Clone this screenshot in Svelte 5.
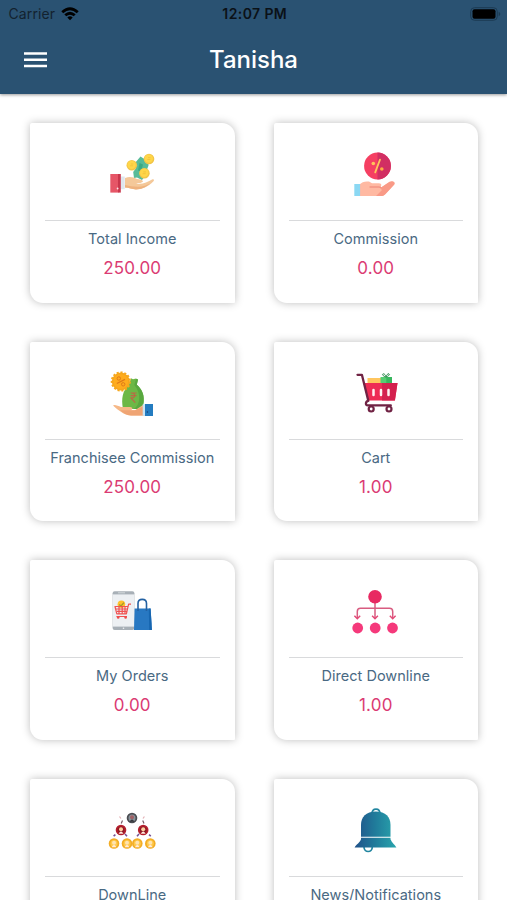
<script>
  const cards = [
    { icon: "income", label: "Total Income", value: "250.00" },
    { icon: "commission", label: "Commission", value: "0.00" },
    { icon: "franchisee", label: "Franchisee Commission", value: "250.00" },
    { icon: "cart", label: "Cart", value: "1.00" },
    { icon: "orders", label: "My Orders", value: "0.00" },
    { icon: "direct", label: "Direct Downline", value: "1.00" },
    { icon: "downline", label: "DownLine" },
    { icon: "news", label: "News/Notifications" },
  ];

  const coins = [[31.8, 20.3], [49, 14], [44.4, 28.2]];
  const people = [
    [32, 17, "#4b4d52", "#a06065"],
    [21, 29, "#b51f2d", "#ffd0a0"],
    [43.2, 29, "#b51f2d", "#ffd0a0"],
    [14, 42.5, "#f3ad25", "#ffe3b0"],
    [27, 42.5, "#f3ad25", "#ffe3b0"],
    [37.3, 42.5, "#f3ad25", "#ffe3b0"],
    [50.3, 42.5, "#f3ad25", "#ffe3b0"],
  ];
</script>

<div class="screen">
  <header>
    <div class="status">
      <div class="carrier">
        <span>Carrier</span>
        <svg width="18" height="14" viewBox="0 0 18 14">
          <path d="M.3 4.2Q9-3.6 17.7 4.2L15.8 6.2Q9 .2 2.2 6.2z" />
          <path d="M3.3 7.3Q9 2.3 14.7 7.3L12.8 9.3Q9 6 5.2 9.3z" />
          <path d="M6.3 10.4Q9 8.2 11.7 10.4L9 13.2z" />
        </svg>
      </div>
      <b>12:07 PM</b>
      <svg class="battery" width="31" height="14" viewBox="0 0 31 14">
        <rect x=".7" y=".7" width="26.6" height="12.6" rx="3.8" fill="none" stroke="#1c3b53" />
        <rect x="2.5" y="2.3" width="23" height="9.4" rx="2" />
        <path d="M28.7 4.7q1.6.7 1.6 2.3t-1.6 2.3z" fill="#1c3b53" />
      </svg>
    </div>
    <div class="bar">
      <button aria-label="Menu">
        <svg width="23" height="16" viewBox="0 0 23 16">
          <path d="M0 .3h23v2.4H0zM0 6.6h23V9H0zM0 12.8h23v2.4H0z" fill="#fff" />
        </svg>
      </button>
      <h1>Tanisha</h1>
    </div>
  </header>

  <main>
    {#each cards as card}
      <section class="card">
        <svg class="icon" width="64" height="56" viewBox="0 0 64 56">
          {#if card.icon == "income"}
            <path d="M35 18l5.5-6.5 3 2 4.5-1 .5 8-1.5 4-1 5.5L42 35l-5-2.5-3 .4-.8-6 2.8-4z" fill="#57bb98" />
            <path d="M39.5 18l3.5 1.5-2 7-3-1z" fill="#3ba982" />
            <path d="M25 33c5-2 9-.7 12 1 3 .6 5 .6 6 2.3-1 2-4 1.7-7 2 5 1.7 11-.8 16.5-4 1.5-.5 2 .7 1 2C48 42 42 44.4 36 44.4c-4 0-7-1.6-11-1.8z" fill="#f4c899" />
            <path d="M25 40c5 1 13 3 20 .8l5-2.2c-5 4.4-9 5.8-14 5.8-4 0-7-1.6-11-1.8z" fill="#eeb27e" />
            <path d="M20.5 31.5h4.2v12.7h-4.2z" fill="#dfe6ef" />
            <path d="M10.3 29h8.2v18.6h-8.2z" fill="#e65667" />
            <path d="M18 29h2.8v18.6H18z" fill="#c9374c" />
            <circle cx="17.6" cy="43.5" r=".9" fill="#ffe8ea" />
            {#each coins as [x, y]}
              <circle cx={x} cy={y} r="5.3" fill="#f2c548" />
              <circle cx={x - 0.2} cy={y - 0.4} r="4.2" fill="#ffd649" />
              <path d="M{x - 1.7} {y + 0.5}h3M{x - 1} {y - 1.3}h2.5" stroke="#f0c038" stroke-width=".8" />
            {/each}
          {:else if card.icon == "commission"}
            <circle cx="33.5" cy="21" r="13.4" fill="#f53f62" />
            <path d="M33.5 7.6a13.4 13.4 0 0 1 0 26.8z" fill="#d12f63" />
            <path d="M36 14.6L31.2 27.4" stroke="#ffc35a" stroke-width="1.8" stroke-linecap="round" />
            <circle cx="29.3" cy="18.5" r="1.8" fill="#ffc35a" />
            <circle cx="37.8" cy="24" r="1.8" fill="#ffab45" />
            <path d="M15 40c3-3 6-4 10-3.4l3 1.6h7c3 0 3.2 3.3 0 3.8h2.8l8-5c3-1.5 6 0 4.5 2.4L41.5 49c-1.5 1.8-3 2-5 2H15z" fill="#ffb9a2" />
            <path d="M35 42h2.8l7.7-5.2c3-1.4 6 .2 4.8 2.6L41.5 49c-1.5 1.8-3 2-5 2H32l6-6z" fill="#f99a87" />
            <path d="M25.5 42H37" stroke="#f08c7c" stroke-width="1.2" />
            <path d="M10.3 39h5.8v12h-5.8z" fill="#8bd8f3" />
          {:else if card.icon == "franchisee"}
            <path d="M31 14.2l2 1.1 3-.8 2 1-1.2 5.2c4.7 4 7.3 9 6.9 16-.2 6-2.4 8.3-8 8.3H23c-2-11-.3-18 5.7-24z" fill="#6cb846" />
            <path d="M36 15l2 .5-1.2 5.2c4.7 4 7.3 9 6.9 16-.2 6-2.4 8.3-8 8.3h-2c7-4 7.6-16 .6-24z" fill="#58a83f" />
            <path d="M30.6 29h6M30.6 31.7h6M31 29c5 0 5 5 0 5l4.3 4.6" fill="none" stroke="#b96a45" stroke-width="1.2" />
            <path d="M13 41.6c1-1.4 5 0 8 1.5h9c3.2.2 3 3 0 3.2h5L43 41h2v10.5H31c-7 0-13-5.5-18-9.9z" fill="#f6b887" />
            <path d="M20 46.3h15l8-3.8h2v9H31c-4 0-7.5-2.3-11-5.2z" fill="#efa474" />
            <path d="M42.7 40.2h3.2v11.6h-3.2z" fill="#c9e4f5" />
            <path d="M45 40h8v12h-8z" fill="#247cc0" />
            <circle cx="47.4" cy="48" r=".8" fill="#173d77" />
            <circle cx="20.8" cy="17.5" r="9" fill="#f6a71d" stroke="#f6a71d" stroke-width="2.2" stroke-dasharray="2.1 1.7" />
            <circle cx="20.8" cy="17.5" r="7.3" fill="#ffac1d" />
            <path d="M16.8 19.5L25 15.4" stroke="#e07a1a" stroke-width="1.2" />
            <circle cx="18.8" cy="14.5" r="1.7" fill="none" stroke="#e07a1a" />
            <circle cx="23.2" cy="20.3" r="1.7" fill="none" stroke="#e07a1a" />
          {:else if card.icon == "cart"}
            <path d="M23.5 14h14v8h-14z" fill="#ffc65f" />
            <path d="M36.5 13H48v9H36.5z" fill="#55cd72" />
            <path d="M42.3 13H48v9h-5.7z" fill="#37b65d" />
            <path d="M41.7 13c-3-1-4-3-2.3-3.2 1.2 0 2 1.3 2.6 3 .6-1.8 1.6-3.3 3-3 1.3.6-.4 2.5-3.3 3.2z" fill="none" stroke="#2c8a4c" stroke-width="1" />
            <path d="M20 19h33.5l-2.6 17.6H23.7z" fill="#ee2c55" />
            <path d="M38 19h15.5l-2.6 17.6H38z" fill="#d4204e" />
            <path d="M29.5 26V31M37 26V31M44.5 26V31" stroke="#fff1f2" stroke-width="2.5" stroke-linecap="round" />
            <path d="M13.5 10.8h4.4l6.4 26c-2.7.4-3.4 4.5-.5 4.6h23" fill="none" stroke="#702344" stroke-width="2.3" stroke-linecap="round" stroke-linejoin="round" />
            <circle cx="27.2" cy="45" r="2.5" fill="#fff" stroke="#702344" stroke-width="2.2" />
            <circle cx="45" cy="45" r="2.5" fill="#fff" stroke="#702344" stroke-width="2.2" />
          {:else if card.icon == "orders"}
            <rect x="12.6" y="9.2" width="21.8" height="38.8" rx="2" fill="#a8b0b7" />
            <path d="M12.6 12.4h21.8v32.2H12.6z" fill="#edf0f3" />
            <path d="M18 10.8h7" stroke="#dee2e5" stroke-width=".8" />
            <circle cx="23.5" cy="46.2" r=".8" fill="#eef0f2" />
            <circle cx="21.4" cy="22.3" r="3.8" fill="#ffc02b" />
            <path d="M19.2 22.6l1.7 1.5 3-3.5" fill="none" stroke="#a39b29" stroke-width="1.4" />
            <path d="M31 22.2h-2.4l-2.2 9.6H16.8L15 24.5h12.7M16 27h11M17 29.4h9.5M19 25v6.4M22.2 25v6.4M25 25v6.4M16.4 34.5H27" fill="none" stroke="#f05252" stroke-width="1.2" stroke-linejoin="round" />
            <circle cx="18.2" cy="35.4" r="1.3" fill="#ee4b4b" />
            <circle cx="25.6" cy="35.4" r="1.3" fill="#ee4b4b" />
            <path d="M34.6 26.5h16l1.3 21.5H34z" fill="#2878c2" />
            <path d="M48.8 26.5h1.8L51.9 48h-2.7z" fill="#1766b0" />
            <path d="M38 29v-7.5c0-5.5 8.5-5.5 8.5 0V29" fill="none" stroke="#2361a2" stroke-width="1.6" />
          {:else if card.icon == "direct"}
            <path d="M31 20v17M13.3 36v-6.5q0-3.2 3.2-3.2h29q3.2 0 3.2 3.2V36" fill="none" stroke="#d85c80" stroke-width="1.5" />
            <path d="M10.4 33.8l2.9 3 2.9-3M28.1 33.8l2.9 3 2.9-3M45.8 33.8l2.9 3 2.9-3" fill="none" stroke="#e34876" stroke-width="1.4" />
            <circle cx="31" cy="14.7" r="6.8" fill="#e82962" />
            <circle cx="13.7" cy="46" r="5.4" fill="#f5397b" />
            <circle cx="31.2" cy="46" r="5.4" fill="#f5397b" />
            <circle cx="48.5" cy="46" r="5.4" fill="#f5397b" />
          {:else if card.icon == "downline"}
            <path d="M19.5 15.5l1.4 2M44.4 15.5l-1.4 2" stroke="#e3b0b5" stroke-width="1.2" />
            <path d="M22.5 19.5l-1.3 3M42.7 19.5l1.3 3" stroke="#765c66" stroke-width="1.2" />
            <path d="M15.4 33.6l-1.8 1.5M25 33l2 2.2M39 33l-2 2.2M49 33.6l1.8 1.5" stroke="#775293" stroke-width="1.6" />
            {#each people as [x, y, ring, face]}
              <circle cx={x} cy={y} r="5.3" fill={ring} />
              <circle cx={x} cy={y} r="3.5" fill={y < 20 ? "#89929a" : y < 35 ? "#8f1925" : "#ffc94a"} />
              <circle cx={x} cy={y - 0.8} r="2" fill={face} />
              <path d="M{x - 2.4} {y + 3.8}q2.4-4.4 4.8 0z" fill={y < 20 ? "#34373b" : "#ffebdc"} />
            {/each}
          {:else}
            <defs>
              <linearGradient id="bell" gradientUnits="userSpaceOnUse" x1="11" x2="52">
                <stop stop-color="#20528a" />
                <stop offset=".5" stop-color="#207c9b" />
                <stop offset="1" stop-color="#29a4ac" />
              </linearGradient>
            </defs>
            <path d="M28 13c0-6.5 8-6.5 8 0M20 46c0 6 8.3 6 8.3 0" fill="none" stroke="#2286a0" stroke-width="1.7" />
            <path d="M17 35.8V24c0-8 5-13.5 14.8-13.5S46.5 16 46.5 24v11.8z" fill="url(#bell)" />
            <path d="M17 36.8h29.5v1.5c1.2 3.7 4 4.8 5.9 8.3H10.6c1.8-3.5 5.3-4.6 6.4-8.3z" fill="url(#bell)" />
          {/if}
        </svg>
        <hr />
        <p class="label">{card.label}</p>
        {#if card.value}
          <p class="value">{card.value}</p>
        {/if}
      </section>
    {/each}
  </main>
</div>

<style>
  :global(body) {
    overflow: hidden;
    background: #fff;
  }
  .screen {
    height: 900px;
    overflow: hidden;
    font-family: Inter, "Liberation Sans", sans-serif;
  }

  header {
    height: 94px;
    box-sizing: border-box;
    background: #2a5272;
    box-shadow: 0 1px 3px #0006;
  }
  .status {
    display: grid;
    grid-template-columns: 1fr auto 1fr;
    align-items: center;
    height: 27px;
    padding: 0 6px 0 8.5px;
    font-size: 14px;
    color: #0b1117;
  }
  .carrier {
    display: flex;
    align-items: center;
    gap: 6px;
    letter-spacing: 0.1px;
    color: #13222f;
  }
  .status b {
    font-size: 14px;
    font-weight: 600;
    letter-spacing: 0.4px;
  }
  .battery {
    justify-self: end;
  }
  .bar {
    display: grid;
    grid-template-columns: 60px 1fr 60px;
    align-items: center;
    height: 66px;
  }
  button {
    display: flex;
    border: none;
    background: none;
    padding: 0 0 0 24px;
  }
  h1 {
    margin: -2px 0 0;
    text-align: center;
    font-size: 24px;
    font-weight: 500;
    color: #fff;
  }

  main {
    display: grid;
    grid-template-columns: 204.5px 204.5px;
    column-gap: 39px;
    row-gap: 39px;
    padding: 29px 0 0 30px;
  }
  .card {
    height: 179.7px;
    box-sizing: border-box;
    padding: 22px 15px 0;
    border-radius: 2px 13px 1px 13px;
    background: #fff;
    box-shadow: 0 0 9px #00000042;
    text-align: center;
  }
  .icon {
    display: block;
    margin: 0 auto;
  }
  hr {
    height: 1px;
    margin: 19px 0 0;
    border: none;
    background: #d9dadc;
  }
  p {
    margin: 0;
  }
  .label {
    margin-top: 8px;
    line-height: 20px;
    font-size: 14.5px;
    letter-spacing: 0.02px;
    color: #496983;
    white-space: nowrap;
  }
  .value {
    margin-top: 8px;
    line-height: 22px;
    font-size: 17px;
    letter-spacing: 0.2px;
    color: #db3b73;
  }
</style>
